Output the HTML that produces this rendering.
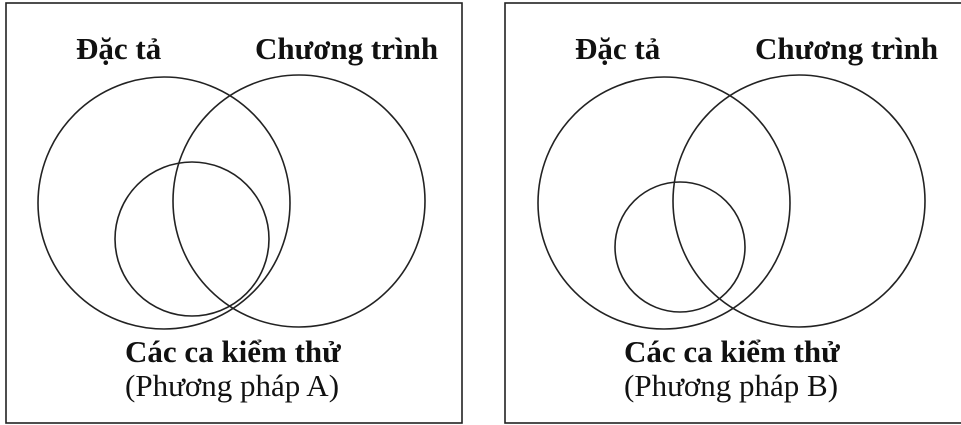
<!DOCTYPE html>
<html><head><meta charset="utf-8"><style>
html,body{margin:0;padding:0;background:#fff;width:961px;height:425px;overflow:hidden;position:relative}
.t{position:absolute;font-family:"Liberation Serif","Times New Roman",Times,serif;color:#111;white-space:nowrap;line-height:1;font-size:31px}
.b{font-weight:bold}
svg{position:absolute;left:0;top:0}
</style></head><body>
<svg width="961" height="425" viewBox="0 0 961 425" xmlns="http://www.w3.org/2000/svg">
<g fill="none" stroke="#222" stroke-width="1.6">
<rect x="6" y="3" width="456" height="420"/>
<rect x="505" y="3" width="460" height="420"/>
<circle cx="164" cy="203" r="126"/>
<circle cx="299" cy="201" r="126"/>
<circle cx="192" cy="239" r="77"/>
<circle cx="664" cy="203" r="126"/>
<circle cx="799" cy="201" r="126"/>
<circle cx="680" cy="247" r="65"/>
</g>
</svg>
<div class="t b" style="left:76px;top:33px">Đặc tả</div>
<div class="t b" style="left:255px;top:33px">Chương trình</div>
<div class="t b" style="left:125px;top:336px">Các ca kiểm thử</div>
<div class="t" style="left:125px;top:370px">(Phương pháp A)</div>
<div class="t b" style="left:575px;top:33px">Đặc tả</div>
<div class="t b" style="left:755px;top:33px">Chương trình</div>
<div class="t b" style="left:624px;top:336px">Các ca kiểm thử</div>
<div class="t" style="left:624px;top:370px">(Phương pháp B)</div>
</body></html>
